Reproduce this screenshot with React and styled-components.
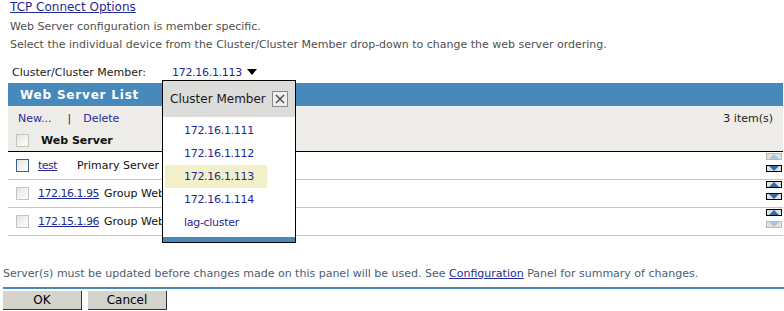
import React from "react";
import styled, { createGlobalStyle, css } from "styled-components";

const color = {
  blue: "#4689ba",
  link: "#1f2a96",
  text: "#222",
  soft: "#4f4f4f",
  note: "#4c5d73",
  bar: "#eeece8",
  rule: "#c4c4c4",
  hilite: "#f2f0c8",
};

const GlobalStyle = createGlobalStyle`
  body {
    margin: 0;
    background: #fff;
    font-family: "DejaVu Sans", Verdana, sans-serif;
    font-size: 11px;
    color: ${color.text};
  }
`;

const Page = styled.div`
  width: 784px;
  display: flex;
  flex-direction: column;
`;

const Intro = styled.div`
  padding: 0 0 0 10px;
  display: flex;
  flex-direction: column;
`;

const TopLink = styled.a`
  color: ${color.link};
  text-decoration: underline;
  line-height: 14px;
  font-size: 12px;
`;

const Para = styled.p`
  margin: 0;
  color: ${color.soft};
  line-height: 18px;
  &:first-of-type {
    margin-top: 4px;
  }
`;

const MemberRow = styled.div`
  position: relative;
  display: flex;
  align-items: center;
  height: 18px;
  margin-top: 9px;
  padding-left: 2px;
`;

const MemberLabel = styled.span`
  width: 160px;
  color: ${color.text};
`;

const MemberValue = styled.span`
  color: ${color.link};
  display: flex;
  align-items: center;
  gap: 5px;
  letter-spacing: -0.3px;
`;

const Caret = styled.span`
  width: 0;
  height: 0;
  border-left: 5px solid transparent;
  border-right: 5px solid transparent;
  border-top: 6px solid #000;
`;

const Popup = styled.div`
  position: absolute;
  left: 152px;
  top: 17px;
  width: 132px;
  height: 161px;
  border: 1px solid #000;
  background: #fff;
  z-index: 5;
  display: flex;
  flex-direction: column;
`;

const PopupHead = styled.div`
  height: 36px;
  background: #dcdcda;
  display: flex;
  align-items: center;
  justify-content: space-between;
  padding: 0 7px 0 7px;
  font-size: 12px;
  color: #1a1a1a;
`;

const CloseBox = styled.span`
  width: 14px;
  height: 14px;
  border: 1px solid #8a8a8a;
  background: #eee;
  display: flex;
  align-items: center;
  justify-content: center;
`;

const PopupList = styled.ul`
  list-style: none;
  margin: 0;
  padding: 2px 0 0 2px;
  flex: 1;
`;

const PopupItem = styled.li`
  height: 23px;
  width: 102px;
  display: flex;
  align-items: center;
  padding-left: 19px;
  box-sizing: border-box;
  letter-spacing: -0.3px;
  color: ${color.link};
  background: ${(p) => (p.$active ? color.hilite : "transparent")};
`;

const PopupFoot = styled.div`
  height: 5px;
  background: ${color.blue};
`;

const Panel = styled.div`
  margin: 2px 1px 0 8px;
  display: flex;
  flex-direction: column;
`;

const PanelTitle = styled.div`
  height: 23px;
  background: ${color.blue};
  color: #fff;
  font-weight: bold;
  font-size: 12px;
  letter-spacing: 0.8px;
  display: flex;
  align-items: center;
  padding-left: 12px;
`;

const Toolbar = styled.div`
  background: ${color.bar};
  border-bottom: 1px solid #000;
  display: flex;
  flex-direction: column;
  padding: 5px 0 0 0;
  height: 40px;
`;

const ActionRow = styled.div`
  display: flex;
  align-items: center;
  height: 15px;
  padding-left: 10px;
  gap: 8px;
`;

const Action = styled.a`
  color: ${color.link};
  text-decoration: none;
`;

const Sep = styled.span`
  color: #333;
  margin: 0 4px 0 8px;
`;

const Count = styled.span`
  margin-left: auto;
  padding-right: 10px;
  color: #222;
`;

const HeadRow = styled.div`
  display: flex;
  align-items: center;
  height: 17px;
  margin-top: 6px;
  padding-left: 8px;
  gap: 12px;
  font-weight: bold;
  color: #111;
`;

const Check = styled.span`
  width: 11px;
  height: 11px;
  flex: none;
  border: 1px solid ${(p) => (p.$focus ? "#3a5f88" : "#c6c5bd")};
  background: linear-gradient(135deg, #e4e4e0, #fff);
`;

const Row = styled.div`
  height: 27px;
  border-bottom: 1px solid ${color.rule};
  display: flex;
  align-items: center;
  padding-left: 8px;
`;

const NameLink = styled.a`
  color: ${color.link};
  text-decoration: underline;
  margin-left: 9px;
  width: ${(p) => p.$w}px;
  flex: none;
  letter-spacing: -0.5px;
`;

const Kind = styled.span`
  color: #111;
`;

const Movers = styled.div`
  margin-left: auto;
  align-self: flex-start;
  margin-top: 1px;
  display: flex;
  flex-direction: column;
  gap: 5px;
  padding-right: 1px;
`;

const MoveBtn = styled.span`
  width: 14px;
  height: 5px;
  border: 1px solid ${(p) => (p.$off ? "#b9b9b9" : "#000")};
  background: #e4e2dc;
  display: flex;
  align-items: center;
  justify-content: center;
  &::after {
    content: "";
    width: 0;
    height: 0;
    border-left: 5px solid transparent;
    border-right: 5px solid transparent;
    ${(p) =>
      p.$dir === "up"
        ? css`border-bottom: 5px solid ${p.$off ? "#a9c4e0" : "#2f6cb0"};`
        : css`border-top: 5px solid ${p.$off ? "#a9c4e0" : "#2f6cb0"};`}
  }
`;

const Note = styled.p`
  margin: 30px 0 0 3px;
  color: ${color.note};
  line-height: 16px;
  a {
    color: ${color.link};
    text-decoration: underline;
  }
`;

const Footer = styled.div`
  margin: 5px 0 0 3px;
  border-top: 2px solid ${color.blue};
  padding-top: 2px;
  display: flex;
  gap: 6px;
`;

const Button = styled.button`
  width: 79px;
  height: 19px;
  padding: 0;
  font-family: inherit;
  font-size: 12px;
  background: #d6d3cc;
  border: none;
  border-right: 1px solid #333;
  border-bottom: 1px solid #333;
  color: #000;
`;

const members = [
  "172.16.1.111",
  "172.16.1.112",
  "172.16.1.113",
  "172.16.1.114",
  "lag-cluster",
];

const servers = [
  { name: "test", w: 39, kind: "Primary Server", up: true, down: false, focus: true },
  { name: "172.16.1.95", w: 66, kind: "Group WebServer", up: false, down: false },
  { name: "172.15.1.96", w: 66, kind: "Group WebServer", up: false, down: true },
];

function App() {
  return (
    <Page>
      <GlobalStyle />
      <Intro>
        <TopLink>TCP Connect Options</TopLink>
        <Para>Web Server configuration is member specific.</Para>
        <Para>
          Select the individual device from the Cluster/Cluster Member drop-down to change the web
          server ordering.
        </Para>
        <MemberRow>
          <MemberLabel>Cluster/Cluster Member:</MemberLabel>
          <MemberValue>
            172.16.1.113 <Caret />
          </MemberValue>
          <Popup>
            <PopupHead>
              Cluster Member
              <CloseBox>
                <svg width="10" height="10" viewBox="0 0 10 10">
                  <path d="M1 1L9 9M9 1L1 9" stroke="#555" strokeWidth="1.6" />
                </svg>
              </CloseBox>
            </PopupHead>
            <PopupList>
              {members.map((m, i) => (
                <PopupItem key={m} $active={i === 2}>
                  {m}
                </PopupItem>
              ))}
            </PopupList>
            <PopupFoot />
          </Popup>
        </MemberRow>
      </Intro>

      <Panel>
        <PanelTitle>Web Server List</PanelTitle>
        <Toolbar>
          <ActionRow>
            <Action>New...</Action>
            <Sep>|</Sep>
            <Action>Delete</Action>
            <Count>3 item(s)</Count>
          </ActionRow>
          <HeadRow>
            <Check />
            Web Server
          </HeadRow>
        </Toolbar>
        {servers.map((s) => (
          <Row key={s.name}>
            <Check $focus={s.focus} />
            <NameLink $w={s.w}>{s.name}</NameLink>
            <Kind>{s.kind}</Kind>
            <Movers>
              <MoveBtn $dir="up" $off={s.up} />
              <MoveBtn $dir="down" $off={s.down} />
            </Movers>
          </Row>
        ))}
      </Panel>

      <Note>
        Server(s) must be updated before changes made on this panel will be used. See{" "}
        <a>Configuration</a> Panel for summary of changes.
      </Note>
      <Footer>
        <Button>OK</Button>
        <Button>Cancel</Button>
      </Footer>
    </Page>
  );
}

export default App;
